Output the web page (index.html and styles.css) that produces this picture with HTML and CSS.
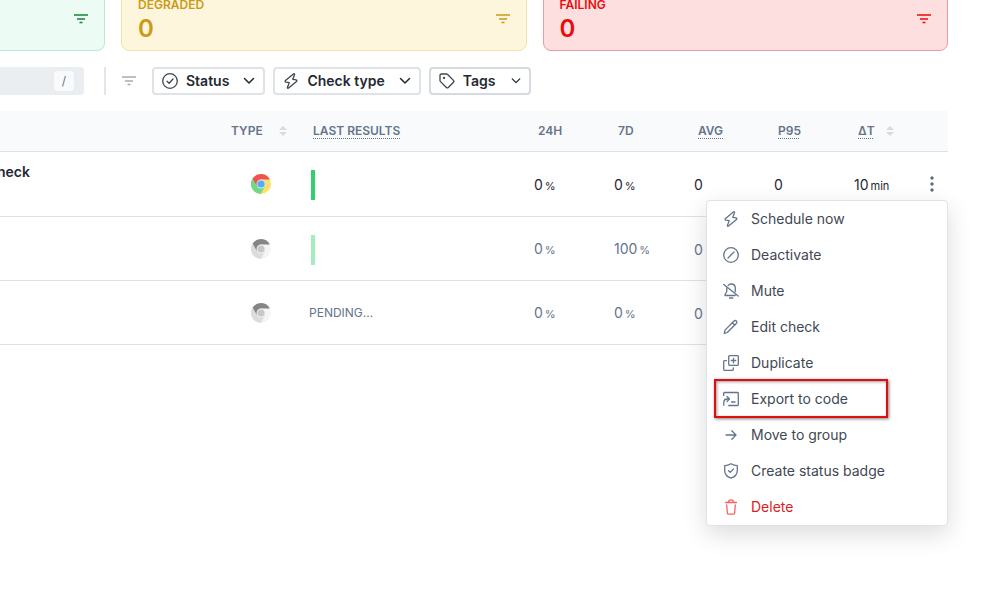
FILE: index.html
```
<!DOCTYPE html>
<html lang="en">
<head>
<meta charset="utf-8">
<title>Checks</title>
<link rel="stylesheet" href="styles.css">
</head>
<body>
<svg class="sprite" aria-hidden="true">
  <symbol id="lines" viewBox="0 0 14 10"><path d="M0 1h14M3 5h8M5.500 8.500h3"/></symbol>
  <symbol id="chevron" viewBox="0 0 12 8"><path d="M1.500 1.500 6 6l4.500-4.500"/></symbol>
  <symbol id="bolt" viewBox="0 0 16 16"><path d="M10.400 1 2.500 7.600c-.6.500-.4 1.300.4 1.500l3.300.6-1.700 4.600c-.3.900.4 1.300 1.100.7l7.900-6.600c.6-.5.400-1.300-.4-1.500l-3.300-.6 1.700-4.600c.3-.9-.4-1.300-1.100-.7z"/></symbol>
  <symbol id="circle-check" viewBox="0 0 16 16"><circle cx="8" cy="8" r="7.300"/><path d="m5 8.300 2.100 2L11 6"/></symbol>
  <symbol id="tag" viewBox="0 0 16 16"><path d="M1 2.300C1 1.500 1.500 1 2.300 1h5.200c.4 0 .8.200 1.100.5l5.900 5.900c.6.600.6 1.300 0 1.900l-5.200 5.200c-.6.600-1.300.6-1.900 0L1.500 8.600C1.200 8.300 1 7.900 1 7.500z"/><circle cx="5" cy="5" r=".5"/></symbol>
  <symbol id="slash" viewBox="0 0 16 16"><circle cx="8" cy="8" r="7.300"/><path d="m5 11 6-6"/></symbol>
  <symbol id="bell-off" viewBox="0 0 16 16"><path d="M.8 1.500 15.200 13M5.200 2.400C6 1.500 7 1 8.200 1c2.500 0 4.100 1.800 4.100 4.200v3.500M3.800 5v3.500L2 11.500v1h10.200M6.500 15h3.300"/></symbol>
  <symbol id="pencil" viewBox="0 0 16 16"><path d="M10.500 2.500c1.100-1.100 2-1.300 2.800-.6.900.8.800 1.800-.3 2.900l-8.700 8.700-3 1 .7-3.400zM9.300 3.800l2.500 2.400"/></symbol>
  <symbol id="copy-plus" viewBox="0 0 16 16"><rect x="5.700" y=".7" width="9.600" height="9.600" rx=".8"/><path d="M10.500 3.300v4.400M8.300 5.500h4.400M3.400 5.700H1.500c-.5 0-.8.3-.8.8v8c0 .5.300.8.800.8h8c.5 0 .8-.3.800-.8v-1.700"/></symbol>
  <symbol id="export" viewBox="0 0 16 16"><path d="M.7 4.500V2.300c0-.5.300-.8.800-.8h13c.5 0 .8.300.8.800v11.400c0 .5-.3.800-.8.800H5.700M.8 14.300v-2.600C.8 9 2 8 4.300 8H6M4 5.500 6.500 8 4 10.500M8.500 11h3.500"/></symbol>
  <symbol id="arrow" viewBox="0 0 16 16"><path d="M3 8h10M8.800 3.800 13 8l-4.200 4.200"/></symbol>
  <symbol id="shield" viewBox="0 0 16 16"><path d="M8 .8c2 1.300 4 1.900 6.300 1.900v5.100c0 3.600-2.300 6-6.300 7.400-4-1.400-6.300-3.800-6.300-7.400V2.700C4 2.700 6 2.100 8 .8z"/><path d="m5.500 7.700 1.800 1.700 3.300-3.500"/></symbol>
  <symbol id="trash" viewBox="0 0 16 16"><path d="M2.500 3.500h11M5.500 3.500c0-1.800.8-2.700 2.500-2.700s2.500.9 2.500 2.700M3.700 6l.7 8.300c.1.600.4.900 1 .9h5.200c.6 0 .9-.3 1-.9l.7-8.300"/></symbol>
  <symbol id="sort" viewBox="0 0 8 10"><path d="M4 0 8 4H0zM4 10 0 6h8z"/></symbol>
  <symbol id="browser" viewBox="0 0 20 20">
    <circle class="c-right" cx="10" cy="10" r="10"/>
    <path class="c-left" d="M1.600 4.600A10 10 0 0 0 9.700 20l4.400-7.600L10 10z"/>
    <path class="c-top" d="M1.600 4.600A10 10 0 0 1 18.900 5.500H10L5.900 12z"/>
    <circle class="c-ring" cx="10" cy="10" r="4.500"/>
    <circle class="c-core" cx="10" cy="10" r="3.600"/>
  </symbol>
</svg>

<main class="page">
  <section class="cards">
    <article class="card passing">
      <button class="card-filter" aria-label="Filter passing"><svg class="lines"><use href="#lines"/></svg></button>
    </article>
    <article class="card degraded">
      <div class="count"><h2>DEGRADED</h2><p>0</p></div>
      <button class="card-filter" aria-label="Filter degraded"><svg class="lines"><use href="#lines"/></svg></button>
    </article>
    <article class="card failing">
      <div class="count"><h2>FAILING</h2><p>0</p></div>
      <button class="card-filter" aria-label="Filter failing"><svg class="lines"><use href="#lines"/></svg></button>
    </article>
  </section>

  <section class="filters">
    <label class="search"><input type="text" aria-label="Search checks"><kbd>/</kbd></label>
    <span class="divider"></span>
    <svg class="lines muted"><use href="#lines"/></svg>
    <button class="filter"><svg class="icon"><use href="#circle-check"/></svg>Status<svg class="chevron"><use href="#chevron"/></svg></button>
    <button class="filter"><svg class="icon"><use href="#bolt"/></svg>Check type<svg class="chevron"><use href="#chevron"/></svg></button>
    <button class="filter tags"><svg class="icon"><use href="#tag"/></svg>Tags<svg class="chevron"><use href="#chevron"/></svg></button>
  </section>

  <table class="checks">
    <colgroup><col class="col-name"><col class="col-type"><col><col class="col-num"><col class="col-num"><col class="col-num"><col class="col-num"><col class="col-delta"><col class="col-actions"></colgroup>
    <thead>
      <tr>
        <th></th>
        <th><div class="sortable">TYPE<svg class="sort"><use href="#sort"/></svg></div></th>
        <th><abbr>LAST RESULTS</abbr></th>
        <th>24H</th>
        <th>7D</th>
        <th><abbr>AVG</abbr></th>
        <th><abbr>P95</abbr></th>
        <th><div class="sortable"><abbr>ΔT</abbr><svg class="sort"><use href="#sort"/></svg></div></th>
        <th></th>
      </tr>
    </thead>
    <tbody>
      <tr>
        <td class="name"><div>check</div></td>
        <td><svg class="browser"><use href="#browser"/></svg></td>
        <td class="value"><div class="bar"></div></td>
        <td class="value">0<small>%</small></td>
        <td class="value">0<small>%</small></td>
        <td class="value">0</td>
        <td class="value">0</td>
        <td class="value">10<small>min</small></td>
        <td>
          <div class="actions">
            <button class="more" aria-label="More actions"><svg viewBox="0 0 4 16"><circle cx="2" cy="2" r="1.700"/><circle cx="2" cy="8" r="1.700"/><circle cx="2" cy="14" r="1.700"/></svg></button>
            <ul class="menu">
              <li><button><svg class="icon"><use href="#bolt"/></svg>Schedule now</button></li>
              <li><button><svg class="icon"><use href="#slash"/></svg>Deactivate</button></li>
              <li><button><svg class="icon"><use href="#bell-off"/></svg>Mute</button></li>
              <li><button><svg class="icon"><use href="#pencil"/></svg>Edit check</button></li>
              <li><button><svg class="icon"><use href="#copy-plus"/></svg>Duplicate</button></li>
              <li class="marked"><button><svg class="icon"><use href="#export"/></svg>Export to code</button></li>
              <li><button><svg class="icon"><use href="#arrow"/></svg>Move to group</button></li>
              <li><button><svg class="icon"><use href="#shield"/></svg>Create status badge</button></li>
              <li><button class="danger"><svg class="icon"><use href="#trash"/></svg>Delete</button></li>
            </ul>
          </div>
        </td>
      </tr>
      <tr class="inactive">
        <td></td>
        <td><svg class="browser"><use href="#browser"/></svg></td>
        <td class="value"><div class="bar"></div></td>
        <td class="value">0<small>%</small></td>
        <td class="value">100<small>%</small></td>
        <td class="value">0</td>
        <td></td>
        <td></td>
        <td></td>
      </tr>
      <tr class="inactive">
        <td></td>
        <td><svg class="browser"><use href="#browser"/></svg></td>
        <td class="pending">PENDING...</td>
        <td class="value">0<small>%</small></td>
        <td class="value">0<small>%</small></td>
        <td class="value">0</td>
        <td></td>
        <td></td>
        <td></td>
      </tr>
    </tbody>
  </table>
</main>
</body>
</html>
```
FILE: styles.css
```
*,
*::after {
  box-sizing: border-box;
}

body {
  margin: 0;
  background: #fff;
  color: #1f2933;
  font: 14px/20px Inter, sans-serif;
}

button {
  border: 0;
  padding: 0;
  background: none;
  color: inherit;
  font: inherit;
}

svg {
  display: block;
  flex: none;
  fill: none;
  stroke: currentColor;
}

.sprite {
  position: absolute;
  width: 0;
  height: 0;
}

.page {
  display: flow-root;
  min-height: 100vh;
  padding-right: 35px;
}

/* Summary cards */
.cards {
  display: grid;
  grid-template-columns: 105px 1fr 1fr;
  gap: 16px;
  margin-top: -20px;
}

.card {
  display: flex;
  justify-content: space-between;
  align-items: center;
  height: 71px;
  padding: 0 16px;
  border: 1px solid;
  border-radius: 8px;
}

.count {
  padding-top: 10px;
}

.card h2 {
  margin: 0;
  font-size: 12px;
  font-weight: 600;
  line-height: 16px;
}

.card p {
  margin: 0;
  font-size: 24px;
  font-weight: 600;
  line-height: 32px;
}

.card-filter {
  margin-left: auto;
  margin-top: 6px;
}

.passing {
  border-color: #b5ecd0;
  border-left: 0;
  border-radius: 0 8px 8px 0;
  background: #ecfcf4;
  color: #15803d;
}

.degraded {
  border-color: #f5e3a6;
  background: #fef5dd;
  color: #cb9a13;
}

.failing {
  border-color: #eb9ba1;
  background: #fedfdf;
  color: #ea0c0c;
}

.lines {
  width: 14px;
  height: 10px;
  stroke-width: 1.5;
}

/* Filter bar */
.filters {
  display: flex;
  align-items: center;
  gap: 8px;
  margin: 16px 0;
}

.search {
  display: flex;
  align-items: center;
  width: 84px;
  height: 28px;
  padding-right: 10px;
  border-radius: 0 4px 4px 0;
  background: #ebeef1;
}

.search input {
  flex: 1;
  min-width: 0;
  border: 0;
  padding: 0;
  background: none;
  font: inherit;
}

.search kbd {
  width: 20px;
  border-radius: 4px;
  background: #f8fafc;
  color: #64748b;
  font: 12px/20px Inter, sans-serif;
  text-align: center;
}

.divider {
  width: 2px;
  height: 28px;
  margin: 0 8px 0 12px;
  background: #e2e6ea;
}

.muted {
  margin-right: 8px;
  color: #a3afbb;
}

.filter {
  display: flex;
  align-items: center;
  gap: 8px;
  height: 28px;
  padding: 0 8px;
  border: 2px solid #dfe3e8;
  border-radius: 4px;
  font-weight: 600;
}

.icon {
  width: 16px;
  height: 16px;
  color: #3c4651;
  stroke-width: 1.3;
  stroke-linecap: round;
  stroke-linejoin: round;
}

.chevron {
  width: 12px;
  height: 8px;
  margin-left: 6px;
  stroke-width: 1.5;
  stroke-linecap: round;
  stroke-linejoin: round;
}

.tags {
  border-color: #d5d9e0;
}

.tags .chevron {
  width: 10px;
  margin-left: 8px;
}

/* Checks table */
.checks {
  width: 100%;
  table-layout: fixed;
  border-collapse: separate;
  border-spacing: 0;
}

.col-name { width: 223px; }
.col-type { width: 82px; }
.col-num { width: 80px; }
.col-delta { width: 62px; }
.col-actions { width: 36px; }

th {
  height: 41px;
  padding: 0 0 0 8px;
  border-bottom: 1px solid #dde1e6;
  background: #f8fafc;
  color: #64748b;
  font-size: 12px;
  font-weight: 600;
  line-height: 16px;
  text-align: left;
  white-space: nowrap;
}

abbr {
  text-decoration: underline dotted 1px;
  text-underline-offset: 3px;
}

.sortable {
  display: flex;
  align-items: center;
  justify-content: space-between;
  padding-right: 18px;
}

.sort {
  width: 8px;
  height: 10px;
  fill: #d7dbe0;
  stroke: none;
}

td {
  height: 64px;
  padding: 0 0 0 4px;
  border-bottom: 1px solid #dfe1e4;
  white-space: nowrap;
}

tbody tr:first-child td {
  height: 65px;
}

.value {
  padding-top: 2px;
}

small {
  margin-left: 2px;
  font-size: 11px;
}

.name {
  padding: 10px 0 0;
  font-weight: 600;
  vertical-align: top;
}

.name div {
  display: flex;
  justify-content: flex-end;
  width: 30px;
  overflow: hidden;
}

.inactive {
  color: #64748b;
}

.pending {
  font-size: 12px;
}

/* Browser check icon, coloured through variables */
.browser {
  --right: #ffe168;
  --left: #72d883;
  --top: #ee5350;
  --ring: #d6eaf5;
  --core: #5ba8f5;
  width: 20px;
  height: 20px;
  margin-left: 24px;
  stroke: none;
}

.inactive .browser {
  --right: #f5f5f5;
  --left: #dcdcdc;
  --top: #858585;
  --ring: #f2f2f2;
  --core: #c8c8c8;
}

.c-right { fill: var(--right); }
.c-left { fill: var(--left); }
.c-top { fill: var(--top); }
.c-ring { fill: var(--ring); }
.c-core { fill: var(--core); }

.bar {
  width: 4px;
  height: 30px;
  margin-left: 2px;
  background: #32d06c;
}

.inactive .bar {
  background: #a4edc0;
}

/* Row actions */
.actions {
  position: relative;
  display: flex;
  justify-content: center;
}

.more svg {
  width: 4px;
  height: 16px;
  fill: #5d6d81;
  stroke: none;
}

.menu {
  position: absolute;
  top: 24px;
  right: 0;
  width: 242px;
  margin: 0;
  padding: 0;
  border: 1px solid #dfe3e8;
  border-radius: 4px;
  background: #fff;
  box-shadow: 0 8px 24px rgba(0, 0, 0, 0.14);
  color: #3f4853;
  list-style: none;
}

.menu li {
  position: relative;
}

.menu button {
  display: flex;
  align-items: center;
  gap: 12px;
  width: 100%;
  height: 36px;
  padding: 0 16px;
}

.menu .icon {
  color: #64748b;
}

.menu .danger {
  color: #d81e1e;
}

.menu .danger .icon {
  color: #f26464;
}

.marked::after {
  content: "";
  position: absolute;
  top: -2px;
  left: 7px;
  width: 174px;
  height: 39px;
  border: 2px solid #dd1010;
  box-shadow: 1px 1px 3px rgba(0, 0, 0, 0.5), inset 1px 1px 3px rgba(0, 0, 0, 0.4);
  pointer-events: none;
}
```
